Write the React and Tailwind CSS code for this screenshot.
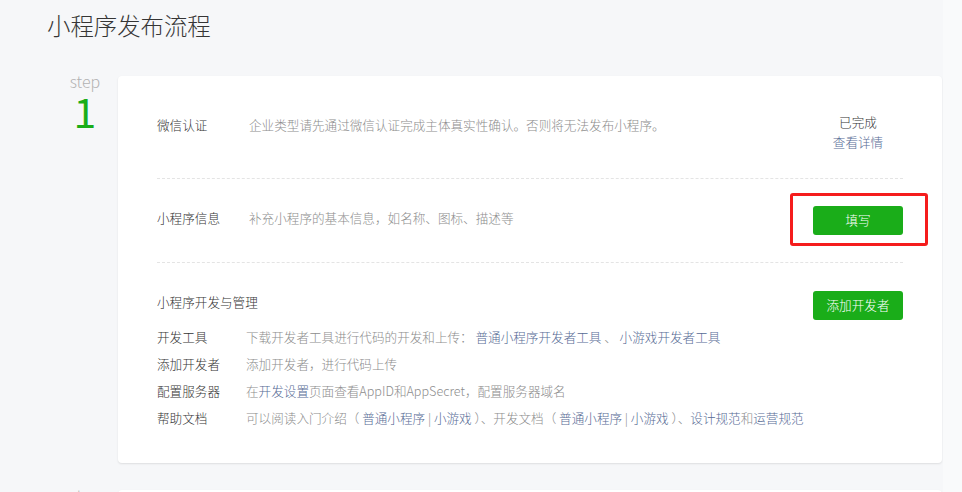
const font = { fontFamily: '"Noto Sans CJK SC", "Noto Sans", sans-serif' };

const Link = ({ children }) => <span className="text-[#576b95]">{children}</span>;

const DevRow = ({ label, children }) => (
    <div className="flex leading-[27px]">
        <div className="w-[89px] shrink-0 text-[#353535]">{label}</div>
        <div className="text-[#8d8d8d]">{children}</div>
    </div>
);

const StepMark = ({ n }) => (
    <div className="w-[71px] shrink-0 pl-[5px] text-center font-light">
        <div className="text-[16px] leading-[18px] text-[#b2b2b2] -mt-[4px]">step</div>
        <div className="text-[41px] leading-[38px] font-normal text-[#1aad19] mt-[1px]">{n}</div>
    </div>
);

const GreenButton = ({ children }) => (
    <button className="w-[90px] h-[29px] rounded-[3px] bg-[#1aad19] text-white text-[12.6px]">
        {children}
    </button>
);

export default function App() {
    return (
        <div className="flex h-[492px] w-[962px] overflow-hidden bg-[#f6f7f9] text-[12.6px] font-light" style={font}>
            <div className="flex-1 pl-[47px]">
                <h1 className="pt-[9px] text-[23.4px] leading-[32px] text-[#353535]">小程序发布流程</h1>

                <div className="flex mt-[35px]">
                    <StepMark n="1" />
                    <div className="w-[824px] rounded-[4px] bg-white px-[39px] shadow-[0_1px_2px_rgba(0,0,0,0.1)]">
                        <div className="flex h-[103px] items-start justify-between pt-[36px] border-b border-dashed border-[#e4e4e4]">
                            <div className="flex mt-[3px] leading-[20px]">
                                <div className="w-[92px] text-[#353535]">微信认证</div>
                                <div className="text-[#8d8d8d]">企业类型请先通过微信认证完成主体真实性确认。否则将无法发布小程序。</div>
                            </div>
                            <div className="w-[90px] text-center leading-[20px]">
                                <div className="text-[#353535]">已完成</div>
                                <Link>查看详情</Link>
                            </div>
                        </div>

                        <div className="flex h-[84px] items-center justify-between border-b border-dashed border-[#e4e4e4]">
                            <div className="flex -mt-[5px] leading-[20px]">
                                <div className="w-[92px] text-[#353535]">小程序信息</div>
                                <div className="text-[#8d8d8d]">补充小程序的基本信息，如名称、图标、描述等</div>
                            </div>
                            <div className="relative">
                                <GreenButton>填写</GreenButton>
                                <div className="absolute left-[-23px] right-[-25px] top-[-13px] bottom-[-11px] rounded-[3px] border-[3px] border-[#f51c1c]" />
                            </div>
                        </div>

                        <div className="pt-[28px] pb-[32px]">
                            <div className="flex items-start justify-between">
                                <div className="mt-[1px] leading-[20px] text-[#353535]">小程序开发与管理</div>
                                <GreenButton>添加开发者</GreenButton>
                            </div>
                            <div className="mt-[3px]">
                                <DevRow label="开发工具">
                                    下载开发者工具进行代码的开发和上传： <Link>普通小程序开发者工具</Link> 、 <Link>小游戏开发者工具</Link>
                                </DevRow>
                                <DevRow label="添加开发者">添加开发者，进行代码上传</DevRow>
                                <DevRow label="配置服务器">
                                    在<Link>开发设置</Link>页面查看AppID和AppSecret，配置服务器域名
                                </DevRow>
                                <DevRow label="帮助文档">
                                    可以阅读入门介绍（ <Link>普通小程序</Link> | <Link>小游戏</Link> ）、开发文档（ <Link>普通小程序</Link> | <Link>小游戏</Link> ）、<Link>设计规范</Link>和<Link>运营规范</Link>
                                </DevRow>
                            </div>
                        </div>
                    </div>
                </div>

                <div className="flex mt-[27px]">
                    <StepMark n="2" />
                    <div className="w-[824px] h-[200px] rounded-[4px] bg-white shadow-[0_1px_2px_rgba(0,0,0,0.1)]" />
                </div>
            </div>
            <div className="w-[19px] shrink-0 bg-[#f9fafb]" />
        </div>
    );
}
